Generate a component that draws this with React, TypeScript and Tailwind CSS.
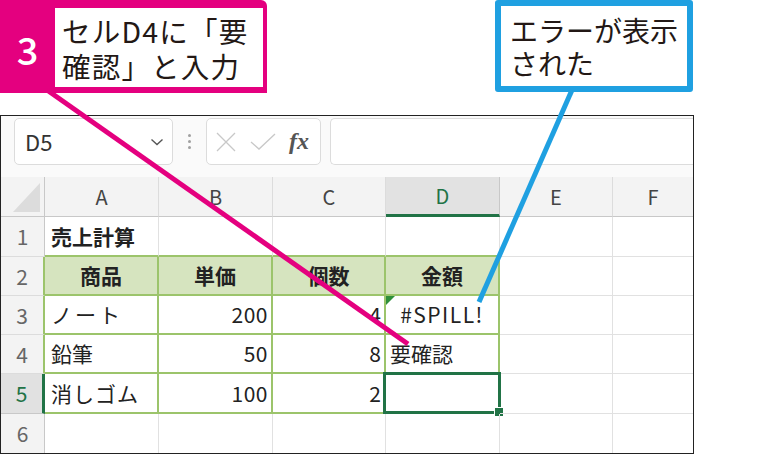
import React from "react";

type Cell = {
  text?: string;
  cls: string;
  tri?: boolean;
  sel?: boolean;
};

const G = "border-[#e1e1e1]";

export default function App() {
  const headerCells = [
    { t: "", cls: "bg-[#f3f3f3] border-r border-b border-[#c8c8c8]" },
    { t: "A", cls: "bg-[#f3f3f3] border-r border-b border-r-[#dcdcdc] border-b-[#c8c8c8] text-[#444]" },
    { t: "B", cls: "bg-[#f3f3f3] border-r border-b border-r-[#dcdcdc] border-b-[#c8c8c8] text-[#444]" },
    { t: "C", cls: "bg-[#f3f3f3] border-r border-b border-r-[#dcdcdc] border-b-[#c8c8c8] text-[#444]" },
    { t: "D", cls: "bg-[#e2e2e2] border-r border-b-[3px] border-r-[#c8c8c8] border-b-[#217346] text-[#217346]" },
    { t: "E", cls: "bg-[#f3f3f3] border-r border-b border-r-[#dcdcdc] border-b-[#c8c8c8] text-[#444]" },
    { t: "F", cls: "bg-[#f3f3f3] border-b border-b-[#c8c8c8] text-[#444]" },
  ];

  const rowHead = (n: string, cls: string) => ({ text: n, cls });

  const tableCell = "border-r-2 border-b-2 border-[#9cc46b]";
  const plain = `border-r border-b ${G}`;
  const plainLast = `border-b ${G}`;

  const rows: Cell[][] = [
    [
      rowHead("1", "bg-[#f3f3f3] border-r border-b border-r-[#c8c8c8] border-b-[#dcdcdc] text-[#666] justify-center"),
      { text: "売上計算", cls: `border-r border-b-2 border-r-[#e1e1e1] border-b-[#9cc46b] font-bold pl-[6px]` },
      { cls: `border-r border-b-2 border-r-[#e1e1e1] border-b-[#9cc46b]` },
      { cls: `border-r border-b-2 border-r-[#e1e1e1] border-b-[#9cc46b]` },
      { cls: `border-r border-b-2 border-r-[#e1e1e1] border-b-[#9cc46b]` },
      { cls: plain },
      { cls: plainLast },
    ],
    [
      rowHead("2", "bg-[#f3f3f3] border-r-2 border-b border-r-[#9cc46b] border-b-[#dcdcdc] text-[#666] justify-center"),
      { text: "商品", cls: `${tableCell} bg-[#d6e4bf] font-bold justify-center` },
      { text: "単価", cls: `${tableCell} bg-[#d6e4bf] font-bold justify-center` },
      { text: "個数", cls: `${tableCell} bg-[#d6e4bf] font-bold justify-center` },
      { text: "金額", cls: `${tableCell} bg-[#d6e4bf] font-bold justify-center` },
      { cls: plain },
      { cls: plainLast },
    ],
    [
      rowHead("3", "bg-[#f3f3f3] border-r-2 border-b border-r-[#9cc46b] border-b-[#dcdcdc] text-[#666] justify-center"),
      { text: "ノート", cls: `${tableCell} pl-[6px] tracking-[3px]` },
      { text: "200", cls: `${tableCell} justify-end pr-[3px] tracking-[0.5px]` },
      { text: "4", cls: `${tableCell} justify-end pr-[3px]` },
      { text: "#SPILL!", cls: `${tableCell} justify-center tracking-[1.5px]`, tri: true },
      { cls: plain },
      { cls: plainLast },
    ],
    [
      rowHead("4", "bg-[#f3f3f3] border-r-2 border-b border-r-[#9cc46b] border-b-[#dcdcdc] text-[#666] justify-center"),
      { text: "鉛筆", cls: `${tableCell} pl-[6px]` },
      { text: "50", cls: `${tableCell} justify-end pr-[3px] tracking-[0.5px]` },
      { text: "8", cls: `${tableCell} justify-end pr-[3px]` },
      { text: "要確認", cls: `${tableCell} pl-[4px]` },
      { cls: plain },
      { cls: plainLast },
    ],
    [
      rowHead("5", "bg-[#e1e1e1] border-r-[3px] border-b border-r-[#217346] border-b-[#c8c8c8] text-[#217346] justify-center"),
      { text: "消しゴム", cls: `${tableCell} pl-[6px] tracking-[1px]` },
      { text: "100", cls: `${tableCell} justify-end pr-[3px] tracking-[0.5px]` },
      { text: "2", cls: `${tableCell} justify-end pr-[3px]` },
      { cls: `${tableCell}`, sel: true },
      { cls: plain },
      { cls: plainLast },
    ],
    [
      rowHead("6", "bg-[#f3f3f3] border-r border-r-[#c8c8c8] text-[#666] justify-center"),
      { cls: `border-r ${G}` },
      { cls: `border-r ${G}` },
      { cls: `border-r ${G}` },
      { cls: `border-r ${G}` },
      { cls: `border-r ${G}` },
      { cls: "" },
    ],
  ];

  return (
    <div className="relative w-[783px] h-[454px] overflow-hidden bg-white font-['Noto_Sans_CJK_JP','Noto_Sans',sans-serif] text-[#222]">
      {/* callouts */}
      <div className="flex items-start h-[115px]">
        <div className="flex w-[267px] h-[93px] bg-[#e4007f] rounded-tr-[6px] pt-[8px] pb-[6px] pr-[4px]">
          <div className="w-[55px] flex items-center justify-center text-white text-[38px] font-medium leading-none pt-[2px]">
            3
          </div>
          <div className="flex-1 bg-white pl-[7px] pt-[5px]">
            <p className="text-[28.5px] leading-[35px] tracking-[1.2px] text-[#231815]">
              セルD4に「要
              <br />
              確認」と入力
            </p>
          </div>
        </div>
        <div className="ml-[228px] w-[198px] h-[92px] border-[6px] border-[#1fa0e1] rounded-[3px] bg-white pl-[9px] pt-[8px]">
          <p className="text-[28px] leading-[33px] text-[#231815]">
            エラーが表示
            <br />
            された
          </p>
        </div>
      </div>

      {/* excel window */}
      <div className="w-[694px] h-[339px] border border-[#222] flex flex-col">
        {/* formula bar */}
        <div className="h-[61px] bg-[#fafafa] flex items-start pt-[2px] pl-[13px] gap-0">
          <div className="w-[159px] h-[47px] bg-white border border-[#dcdcdc] rounded-[5px] flex items-center pl-[10px] pr-[8px] text-[22px] text-[#333]">
            <span className="flex-1">D5</span>
            <svg width="14" height="8" viewBox="0 0 14 8">
              <path d="M1.5 1.5 L7 6.5 L12.5 1.5" fill="none" stroke="#555" strokeWidth="1.4" />
            </svg>
          </div>
          <div className="w-[33px] h-[47px] flex flex-col items-center justify-center gap-[3px]">
            <span className="w-[3px] h-[3px] bg-[#a0a0a0] rounded-full" />
            <span className="w-[3px] h-[3px] bg-[#a0a0a0] rounded-full" />
            <span className="w-[3px] h-[3px] bg-[#a0a0a0] rounded-full" />
          </div>
          <div className="w-[115px] h-[47px] bg-white border border-[#dcdcdc] rounded-[5px] flex items-center pl-[8px] gap-[13px]">
            <svg width="22" height="20" viewBox="0 0 22 20">
              <path d="M2 1 L20 19 M20 1 L2 19" stroke="#c8c8c8" strokeWidth="1.3" fill="none" />
            </svg>
            <svg width="26" height="18" viewBox="0 0 26 18">
              <path d="M1 9 L9 16 L25 1" stroke="#c8c8c8" strokeWidth="1.3" fill="none" />
            </svg>
            <span className="font-['Liberation_Serif',serif] italic font-bold text-[24px] text-[#555] leading-none -mt-[2px]">
              fx
            </span>
          </div>
          <div className="ml-[9px] flex-1 h-[47px] bg-white border border-r-0 border-[#dcdcdc] rounded-l-[5px]" />
        </div>

        {/* grid */}
        <div className="grid grid-cols-[44px_114px_114px_113px_114px_113px_80px] grid-rows-[40px_40px_39px_39px_39px_40px_39px] text-[21px] leading-none">
          {headerCells.map((h, i) =>
            i === 0 ? (
              <div key={i} className={`flex items-end justify-end pr-[4px] pb-[4px] ${h.cls}`}>
                <svg width="27" height="29" viewBox="0 0 27 29">
                  <polygon points="27,0 27,29 0,29" fill="#dcdcdc" />
                </svg>
              </div>
            ) : (
              <div key={i} className={`flex items-center justify-center text-[20px] ${h.cls}`}>
                {h.t}
              </div>
            )
          )}
          {rows.map((r, ri) =>
            r.map((c, ci) => (
              <div
                key={`${ri}-${ci}`}
                className={`relative flex items-center whitespace-nowrap ${ci === 0 ? "text-[21px]" : ""} ${c.cls}`}
              >
                {c.tri && (
                  <svg className="absolute left-0 top-0" width="9" height="9" viewBox="0 0 9 9">
                    <polygon points="0,0 9,0 0,9" fill="#2f8f3a" />
                  </svg>
                )}
                {c.text}
                {c.sel && (
                  <div className="absolute -left-[3px] -top-[2px] -right-[3px] -bottom-[2px] border-[3px] border-[#217346]">
                    <div className="absolute -right-[6px] -bottom-[6px] w-[8px] h-[8px] bg-[#217346] border border-white box-content" />
                  </div>
                )}
              </div>
            ))
          )}
        </div>
      </div>

      {/* leader lines */}
      <svg className="absolute left-0 top-0 pointer-events-none" width="783" height="454" viewBox="0 0 783 454">
        <line x1="47" y1="90" x2="408" y2="344" stroke="#e4007f" strokeWidth="5" />
        <line x1="572" y1="90" x2="479" y2="302" stroke="#1fa0e1" strokeWidth="5" />
      </svg>
    </div>
  );
}
